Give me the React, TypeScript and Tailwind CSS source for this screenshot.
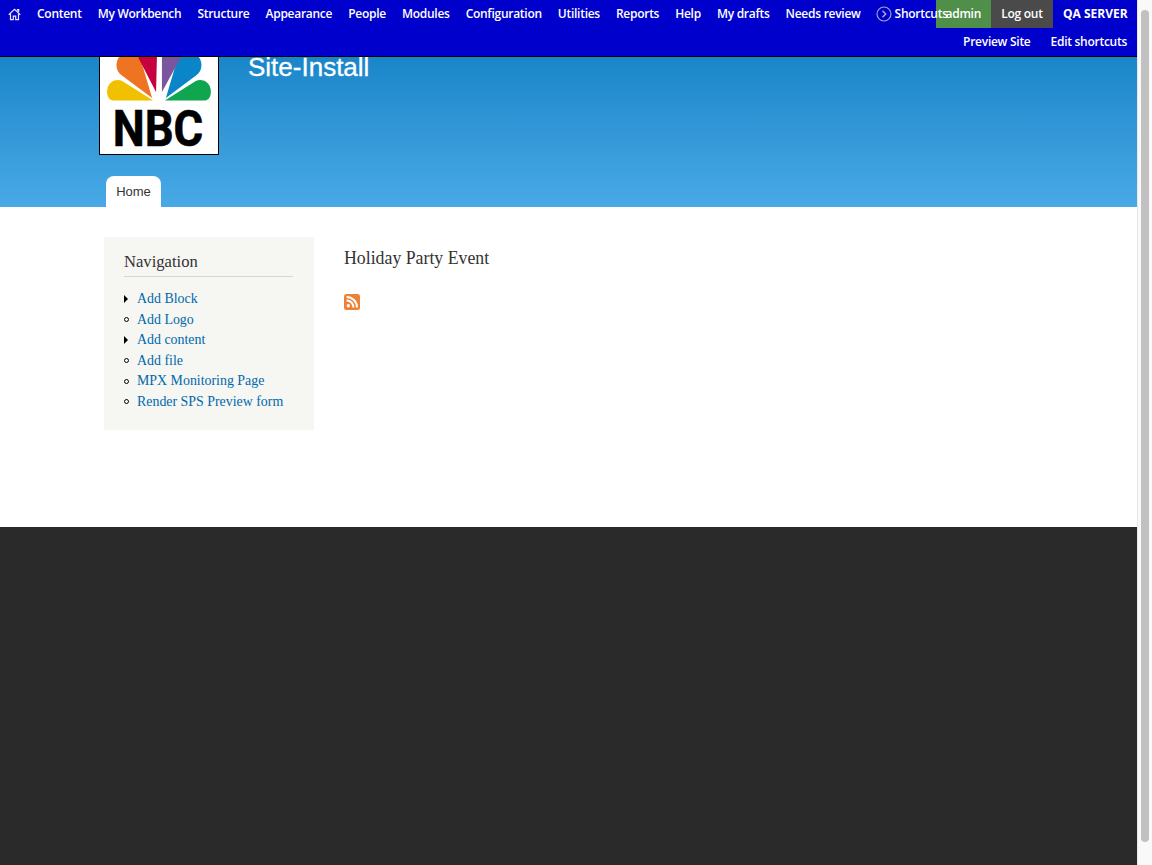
import React from "react";

const menu = ["Content", "My Workbench", "Structure", "Appearance", "People", "Modules", "Configuration", "Utilities", "Reports", "Help", "My drafts", "Needs review"];
const nav = [
  { label: "Add Block", arrow: true },
  { label: "Add Logo", arrow: false },
  { label: "Add content", arrow: true },
  { label: "Add file", arrow: false },
  { label: "MPX Monitoring Page", arrow: false },
  { label: "Render SPS Preview form", arrow: false },
];

function HomeIcon() {
  return (
    <svg width="13" height="13" viewBox="0 0 14 14" fill="none" stroke="#e6e6ff" strokeWidth="1.3" strokeLinejoin="miter">
      <path d="M0.8 7.2 7 1.500l6.200 5.700" />
      <path d="M2.700 6.200V12.600h3V8.800h2.600v3.800h3V6.200" />
      <path d="M10.200 3V1.600h1.300v2.800" />
    </svg>
  );
}

function CircleArrow() {
  return (
    <svg width="16" height="16" viewBox="0 0 16 16" fill="none" stroke="#a9a9c9" strokeWidth="1.1">
      <circle cx="8" cy="8" r="7" />
      <path d="M6.500 4.800 9.700 8l-3.200 3.200" strokeWidth="1.500" />
    </svg>
  );
}

function NbcLogo() {
  return (
    <svg width="120" height="120" viewBox="0 0 120 120" className="block border border-black bg-white">
      <path fill="#f1c100" d="M54 65.500H13C8 65 6 58 8 52c2-6 9-9 15-6z" />
      <path fill="#0fa64f" d="M66 65.500h41c5-.5 7-7.500 5-13.500-2-6-9-9-15-6z" />
      <path fill="#ee7422" d="M53 63 22 40C15 35 15 24 22 19c7-4 16-1 20 7z" />
      <path fill="#0a86c8" d="M67 63 98 40c7-5 7-16 0-21-7-4-16-1-20 7z" />
      <path fill="#c7003e" d="M57 57 39 22C36 14 40 4 48 3c7 0 10 6 10 14z" />
      <path fill="#7a569f" d="M63 57 82 22c3-8-1-18-9-19-7 0-10 6-10 14z" />
      <text x="13" y="112" fontFamily="Roboto, sans-serif" fontWeight="700" fontSize="51" textLength="92" lengthAdjust="spacingAndGlyphs" fill="#000" stroke="#000" strokeWidth="0.6">NBC</text>
    </svg>
  );
}

function RssIcon() {
  return (
    <svg width="16" height="16" viewBox="0 0 16 16" className="block">
      <rect width="16" height="16" rx="2.500" fill="#ee8136" />
      <circle cx="4.300" cy="11.700" r="1.700" fill="#fff" />
      <path d="M2.600 6.500a6.900 6.900 0 0 1 6.900 6.900" fill="none" stroke="#fff" strokeWidth="2" />
      <path d="M2.600 3a10.400 10.400 0 0 1 10.400 10.400" fill="none" stroke="#fff" strokeWidth="2" />
    </svg>
  );
}

export default function App() {
  return (
    <div className="flex h-[865px] overflow-hidden bg-white">
      <div className="flex w-[1137px] flex-col">
        <div className="relative z-10 h-[57px] shrink-0 border-b border-black bg-[#0000cc] font-['Open_Sans',sans-serif] text-[12px] font-semibold tracking-[-0.27px] text-white">
          <div className="absolute right-0 top-0 flex h-[28px] items-center whitespace-nowrap">
            <span className="flex h-full w-[55px] items-center justify-end pr-[10px] bg-[#4f8f49]">admin</span>
            <span className="flex h-full w-[62px] items-center justify-center bg-[#4a4a4a]">Log out</span>
            <span className="w-[84px] pl-[10px] font-bold tracking-normal">QA SERVER</span>
          </div>
          <div className="relative flex h-[28px] items-center pl-[8px]">
            <span className="mr-[16px]"><HomeIcon /></span>
            <div className="flex gap-[16px] whitespace-nowrap">
              {menu.map((m) => <span key={m}>{m}</span>)}
            </div>
            <span className="ml-[15px] mr-[3px]"><CircleArrow /></span>
            <span>Shortcuts</span>
          </div>
          <div className="flex h-[28px] items-center justify-end gap-[20px] pr-[10px]">
            <span>Preview Site</span>
            <span>Edit shortcuts</span>
          </div>
        </div>

        <div className="h-[150px] shrink-0 bg-gradient-to-b from-[#1886c9] to-[#48a9e6] font-['Liberation_Sans',sans-serif]">
          <div className="flex pl-[99px]">
            <div className="-mt-[22px]"><NbcLogo /></div>
            <h1 className="ml-[29px] text-[26px] leading-[20px] text-white [-webkit-text-stroke:0.3px_white]">Site-Install</h1>
          </div>
          <div className="pl-[106px] pt-[21px]">
            <div className="flex h-[31px] w-[55px] items-center justify-center rounded-t-[8px] bg-white text-[13px] text-[#333]">Home</div>
          </div>
        </div>

        <div className="flex h-[320px] shrink-0 bg-white pl-[104px] pt-[30px] font-['Liberation_Serif',serif]">
          <aside className="h-[193px] w-[210px] bg-[#f6f6f2] pl-[20px] pr-[21px] pt-[14px]">
            <h2 className="h-[26px] border-b border-[#d6d6d6] text-[16.6px] leading-[22px] text-[#333]">Navigation</h2>
            <ul className="mt-[12px] text-[13.9px] leading-[20.5px] text-[#0069ad]">
              {nav.map((n) => (
                <li key={n.label} className="flex items-center">
                  <span className="flex w-[13px] shrink-0">
                    {n.arrow ? (
                      <span className="h-0 w-0 border-y-[4px] border-l-[4px] border-y-transparent border-l-black" />
                    ) : (
                      <span className="h-[5px] w-[5px] rounded-full border border-black bg-[#f6f6f2]" />
                    )}
                  </span>
                  <span>{n.label}</span>
                </li>
              ))}
            </ul>
          </aside>
          <main className="ml-[30px] pt-[10px]">
            <h2 className="text-[17.8px] leading-[22px] text-[#333]">Holiday Party Event</h2>
            <div className="mt-[25px]"><RssIcon /></div>
          </main>
        </div>

        <div className="flex-1 bg-[#2a2a2a]" />
      </div>
      <div className="w-[15px] shrink-0 border-l border-[#e8e8e8] bg-[#f9f9f9] pl-[3px] pt-[10px]">
        <div className="h-[832px] w-[8px] rounded-[4px] bg-[#c1c1c1]" />
      </div>
    </div>
  );
}
